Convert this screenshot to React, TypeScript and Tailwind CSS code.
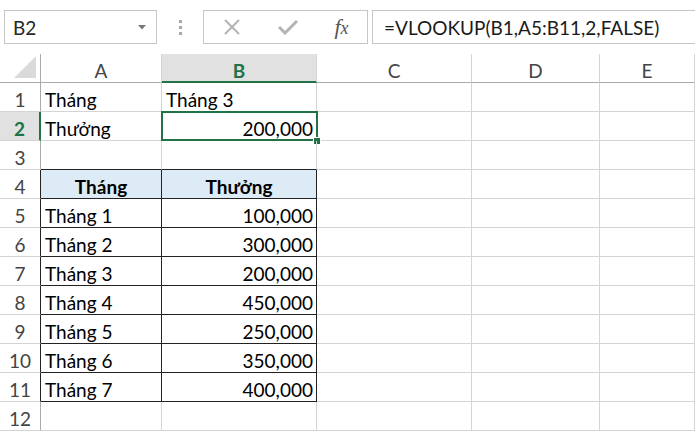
import React from 'react';

const cols = [41, 121, 155, 155, 128, 95];
const letters = ['A', 'B', 'C', 'D', 'E'];

type Row = { n: number; a?: string; b?: string; head?: boolean; table?: boolean };

const rows: Row[] = [
    { n: 1, a: 'Tháng', b: 'Tháng 3' },
    { n: 2, a: 'Thưởng', b: '200,000' },
    { n: 3 },
    { n: 4, a: 'Tháng', b: 'Thưởng', head: true, table: true },
    { n: 5, a: 'Tháng 1', b: '100,000', table: true },
    { n: 6, a: 'Tháng 2', b: '300,000', table: true },
    { n: 7, a: 'Tháng 3', b: '200,000', table: true },
    { n: 8, a: 'Tháng 4', b: '450,000', table: true },
    { n: 9, a: 'Tháng 5', b: '250,000', table: true },
    { n: 10, a: 'Tháng 6', b: '350,000', table: true },
    { n: 11, a: 'Tháng 7', b: '400,000', table: true },
    { n: 12 },
];

function Toolbar() {
    return (
        <div className="flex h-[54px] items-start pt-[10px] pl-[4px]">
            {/* name box */}
            <div className="flex h-[34px] w-[153px] items-center justify-between border border-[#c6c6c6] pl-[8px] pr-[10px]">
                <span className="text-[19px] text-[#262626]">B2</span>
                <svg width="8" height="5" viewBox="0 0 8 5">
                    <path d="M0 0 H8 L4 4.5 Z" fill="#777" />
                </svg>
            </div>
            <div className="flex h-[34px] w-[46px] flex-col items-center justify-center gap-[3px]">
                <span className="h-[3px] w-[3px] bg-[#a8a8a8]" />
                <span className="h-[3px] w-[3px] bg-[#a8a8a8]" />
                <span className="h-[3px] w-[3px] bg-[#a8a8a8]" />
            </div>
            {/* cancel / enter / fx */}
            <div className="flex h-[34px] w-[165px] items-center border border-[#c6c6c6]">
                <div className="flex w-[56px] justify-center">
                    <svg width="18" height="18" viewBox="0 0 18 18">
                        <path d="M2 2 L16 16 M16 2 L2 16" stroke="#b4b4b4" strokeWidth="2" />
                    </svg>
                </div>
                <div className="flex w-[56px] justify-center">
                    <svg width="20" height="16" viewBox="0 0 20 16">
                        <path d="M1 8 L7 14 L19 2" stroke="#b4b4b4" strokeWidth="3" fill="none" />
                    </svg>
                </div>
                <div className="flex w-[51px] justify-center">
                    <span className="font-['Liberation_Serif',serif] text-[22px] italic text-[#555]">
                        f<span className="text-[18px]">x</span>
                    </span>
                </div>
            </div>
            <div className="ml-[4px] flex h-[34px] flex-1 items-center border border-r-0 border-[#c6c6c6] pl-[11px]">
                <span className="text-[19px] text-[#1a1a1a]">=VLOOKUP(B1,A5:B11,2,FALSE)</span>
            </div>
        </div>
    );
}

function HeaderRow() {
    return (
        <div className="flex h-[29px]">
            <div
                className="relative h-full border-r border-b border-[#ababab]"
                style={{ width: cols[0] }}
            >
                <svg className="absolute right-[4px] bottom-[4px]" width="22" height="22" viewBox="0 0 22 22">
                    <path d="M22 0 V22 H0 Z" fill="#dadada" />
                </svg>
            </div>
            {letters.map((l, i) =>
                l === 'B' ? (
                    <div
                        key={l}
                        className="flex h-full items-end justify-center border-r border-b-2 border-r-[#d4d4d4] border-b-[#217346] bg-[#e1e1e1] pb-[1px] text-[19px] font-bold text-[#217346]"
                        style={{ width: cols[i + 1] }}
                    >
                        {l}
                    </div>
                ) : (
                    <div
                        key={l}
                        className="flex h-full items-end justify-center border-r border-b border-r-[#d4d4d4] border-b-[#ababab] pb-[2px] text-[19px] text-[#444]"
                        style={{ width: cols[i + 1] }}
                    >
                        {l}
                    </div>
                )
            )}
        </div>
    );
}

function SheetRow({ r }: { r: Row }) {
    const sel = r.n === 2;
    const blackBottom = r.table || r.n === 3;
    const numCls = sel
        ? 'bg-[#e1e1e1] font-bold text-[#217346] border-r-2 border-r-[#217346] border-b-[#d4d4d4]'
        : r.table
          ? 'text-[#444] border-r border-r-[#222] border-b-[#d4d4d4]'
          : 'text-[#444] border-r border-r-[#ababab] border-b-[#d4d4d4]';
    const cellBorder = (black: boolean, rightBlack: boolean) =>
        `${black ? 'border-b-[#222]' : 'border-b-[#d4d4d4]'} ${rightBlack ? 'border-r-[#222]' : 'border-r-[#d4d4d4]'}`;
    return (
        <div className="flex h-[29px]">
            <div
                className={`flex h-full items-end justify-center border-b pb-[2px] text-[19px] ${numCls}`}
                style={{ width: cols[0] }}
            >
                {r.n}
            </div>
            <div
                className={`flex h-full items-end border-r border-b pb-[2px] text-[19px] ${cellBorder(blackBottom, !!r.table)} ${r.head ? 'justify-center bg-[#ddebf7] font-bold' : 'pl-[4px]'}`}
                style={{ width: cols[1] }}
            >
                {r.a}
            </div>
            <div
                className={`relative flex h-full items-end border-r border-b pb-[2px] text-[19px] ${cellBorder(blackBottom, !!r.table)} ${r.head ? 'justify-center bg-[#ddebf7] font-bold' : r.n === 1 ? 'pl-[4px]' : 'justify-end pr-[3px]'}`}
                style={{ width: cols[2] }}
            >
                {r.b}
                {sel && (
                    <>
                        <div className="absolute top-[-1px] left-[-1px] h-[30px] w-[157px] border-2 border-[#217346]" />
                        <div className="absolute right-[-5px] bottom-[-5px] h-[8px] w-[8px] border border-white bg-[#217346]" />
                    </>
                )}
            </div>
            {cols.slice(3).map((w, i) => (
                <div key={i} className="h-full border-r border-b border-[#d4d4d4]" style={{ width: w }} />
            ))}
        </div>
    );
}

export default function App() {
    return (
        <div className="h-[431px] w-[695px] overflow-hidden bg-white font-['Lato',sans-serif] leading-none text-black">
            <Toolbar />
            <HeaderRow />
            {rows.map((r) => (
                <SheetRow key={r.n} r={r} />
            ))}
        </div>
    );
}
